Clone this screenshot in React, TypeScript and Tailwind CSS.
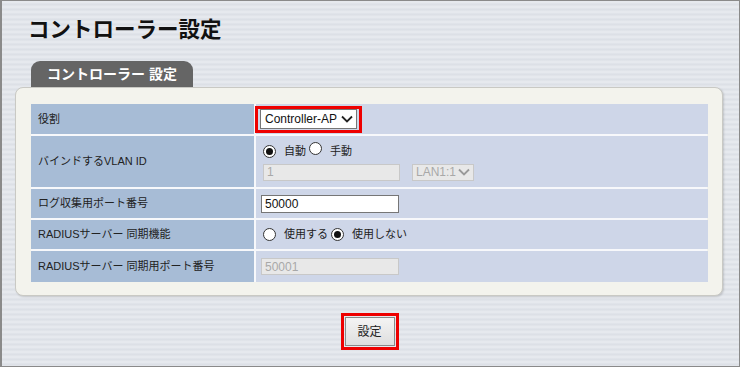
import React from "react";

const jp = { fontFamily: '"Liberation Sans", "Noto Sans CJK JP", sans-serif' };

const Radio = ({ checked }: { checked?: boolean }) => (
  <span className="inline-flex h-[13px] w-[13px] items-center justify-center rounded-full border border-[#333] bg-white">
    {checked && <span className="h-[7px] w-[7px] rounded-full bg-[#111]" />}
  </span>
);

const Chevron = ({ color = "#222" }: { color?: string }) => (
  <svg width="12" height="8" viewBox="0 0 12 8" fill="none">
    <path d="M1 1.5 L6 6.5 L11 1.5" stroke={color} strokeWidth="1.8" />
  </svg>
);

const Label = ({ children, h }: { children: React.ReactNode; h: string }) => (
  <div className={`flex items-center bg-[#a7bcd6] pl-[7px] text-[11px] text-[#222] ${h}`}>{children}</div>
);

const Value = ({ children, h }: { children: React.ReactNode; h: string }) => (
  <div className={`flex items-center bg-[#ced6e8] pl-[5px] text-[11px] text-[#222] ${h}`}>{children}</div>
);

export default function App() {
  return (
    <div
      style={jp}
      className="relative h-[367px] w-[740px] overflow-hidden border border-l-2 border-[#8a8a8a] bg-[#e2e5ea] bg-[repeating-linear-gradient(180deg,#e6e9ee_0px,#e6e9ee_2px,#dadee5_3px,#e3e6eb_5px)]"
    >
      <h1 className="ml-[26px] mt-[14px] text-[21.5px] font-bold leading-[30px] text-[#111]">コントローラー設定</h1>

      <div className="ml-[29px] mt-[16px] flex h-[26px] w-[162px] items-center justify-center rounded-t-[9px] bg-[#656565] text-[14px] font-bold text-white">
        コントローラー 設定
      </div>

      <div className="ml-[13px] w-[708px] rounded-[8px] border border-[#c9c9c4] bg-[#f3f3ed] px-[15px] pb-[13px] pt-[16px] shadow-[1px_1px_2px_rgba(0,0,0,0.15)]">
        <div className="grid grid-cols-[223px_452px] gap-x-[2px] gap-y-[2px] bg-[#f7f8fb]">
          <Label h="h-[30px]">役割</Label>
          <Value h="h-[30px]">
            <div className="ml-[-6px] flex h-[27px] items-center border-[3px] border-[#ee0000] px-[2px]">
              <div className="flex h-[20px] w-[97px] items-center justify-between whitespace-nowrap border border-[#767676] bg-white pl-[4px] pr-[3px] text-[12px] text-[#111]">
                <span>Controller-AP</span>
                <Chevron />
              </div>
            </div>
          </Value>

          <Label h="h-[51px]">バインドするVLAN ID</Label>
          <Value h="h-[51px]">
            <div className="flex flex-col gap-[4px] pl-[2px]">
              <div className="flex items-center">
                <Radio checked />
                <span className="ml-[8px]">自動</span>
                <span className="ml-[3px]"><Radio /></span>
                <span className="ml-[8px]">手動</span>
              </div>
              <div className="flex items-center">
                <div className="flex h-[17px] w-[137px] items-center border border-[#c8c8c8] bg-[#e8e8e8] pl-[3px] text-[12px] text-[#a8a8a8]">1</div>
                <div className="ml-[12px] flex h-[17px] w-[62px] items-center justify-between whitespace-nowrap border border-[#c8c8c8] bg-[#e8e8e8] px-[3px] text-[12px] text-[#a8a8a8]">
                  <span>LAN1:1</span>
                  <Chevron color="#999" />
                </div>
              </div>
            </div>
          </Value>

          <Label h="h-[29px]">ログ収集用ポート番号</Label>
          <Value h="h-[29px]">
            <div className="flex h-[18px] w-[138px] items-center border border-[#767676] bg-white pl-[3px] text-[12px] text-[#111]">50000</div>
          </Value>

          <Label h="h-[29px]">RADIUSサーバー 同期機能</Label>
          <Value h="h-[29px]">
            <div className="flex items-center pl-[2px]">
              <Radio />
              <span className="ml-[8px]">使用する</span>
              <span className="ml-[3px]"><Radio checked /></span>
              <span className="ml-[8px]">使用しない</span>
            </div>
          </Value>

          <Label h="h-[31px]">RADIUSサーバー 同期用ポート番号</Label>
          <Value h="h-[31px]">
            <div className="flex h-[17px] w-[138px] items-center border border-[#c8c8c8] bg-[#e8e8e8] pl-[3px] text-[12px] text-[#a8a8a8]">50001</div>
          </Value>
        </div>
      </div>

      <div className="mt-[17px] flex justify-center pr-[2px]">
        <div className="border-[3px] border-[#ee0000] p-[1px]">
          <div className="flex h-[29px] w-[50px] items-center justify-center border border-[#8a8a8a] bg-[linear-gradient(180deg,#f4f4f4,#dedede)] text-[12px] text-[#222]">
            設定
          </div>
        </div>
      </div>
    </div>
  );
}
